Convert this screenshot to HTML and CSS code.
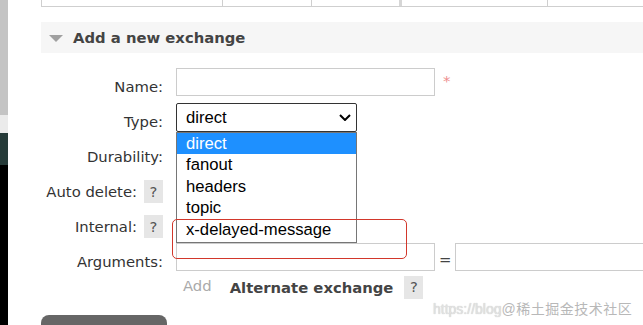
FILE: index.html
```html
<!DOCTYPE html>
<html>
<head>
<meta charset="utf-8">
<title>Add a new exchange</title>
<link rel="stylesheet" href="styles.css">
</head>
<body>
<div class="screen">
    <div class="edge">
        <div class="edge-a"></div>
        <div class="edge-b"></div>
        <div class="edge-c"></div>
        <div class="edge-d"></div>
    </div>
    <div class="main">
        <div class="tbl">
            <span class="cell w1"></span>
            <span class="cell w2"></span>
            <span class="cell w3"></span>
            <span class="cell w4 thick"></span>
            <span class="cell w5"></span>
        </div>
        <h2 class="sec-head"><span class="tri"></span>Add a new exchange</h2>
        <div class="form">
            <div class="row">
                <label class="lbl"><span class="txt">Name:</span></label>
                <div class="fld"><input class="inp" type="text"><span class="req">*</span></div>
            </div>
            <div class="row">
                <label class="lbl"><span class="txt">Type:</span></label>
                <div class="fld">
                    <div class="select">
                        <span>direct</span>
                        <svg class="chev" width="12" height="7" viewBox="0 0 12 7"><path d="M1 1L6 6L11 1" fill="none" stroke="#000" stroke-width="2"/></svg>
                    </div>
                    <ul class="drop">
                        <li class="on">direct</li>
                        <li>fanout</li>
                        <li>headers</li>
                        <li>topic</li>
                        <li>x-delayed-message</li>
                    </ul>
                </div>
            </div>
            <div class="row">
                <label class="lbl"><span class="txt">Durability:</span></label>
                <div class="fld"><div class="select small"></div></div>
            </div>
            <div class="row">
                <label class="lbl"><span class="txt">Auto delete:</span><span class="help">?</span></label>
                <div class="fld"><div class="select small"></div></div>
            </div>
            <div class="row">
                <label class="lbl"><span class="txt">Internal:</span><span class="help">?</span></label>
                <div class="fld"><div class="select small"></div></div>
            </div>
            <div class="row">
                <label class="lbl"><span class="txt">Arguments:</span></label>
                <div class="fld"><input class="inp" type="text"><span class="eq">=</span><input class="inp inp-val" type="text"></div>
            </div>
            <div class="links">
                <span class="add">Add</span>
                <span class="arg-link">Alternate exchange</span>
                <span class="help">?</span>
            </div>
        </div>
        <div class="btn"></div>
    </div>
    <div class="callout"></div>
    <div class="mark"><span class="url">https://blog</span><span class="site">@稀土掘金技术社区</span></div>
</div>
</body>
</html>
```

FILE: styles.css
```css
html,body,div,ul,li,h2{margin:0;padding:0;}
ul{list-style-type:none;}
html,body{height:325px;overflow:hidden;background:#fff;}
body{font:14.8px "DejaVu Sans",Verdana,sans-serif;color:#333;}

.screen{position:relative;display:flex;height:325px;overflow:hidden;}

/* window edge behind the page */
.edge{width:8px;flex:none;display:flex;flex-direction:column;}
.edge-a{height:115px;background:#c4c4c4;}
.edge-b{height:18px;background:#ebebeb;}
.edge-c{height:32px;background:#263b39;}
.edge-d{flex:1;background:#000;}

.main{flex:1;padding-left:33px;min-width:0;}

/* bottom of the table above */
.tbl{display:flex;height:6px;border-bottom:1px solid #cfcfcf;}
.tbl .cell{box-sizing:border-box;border-left:1px solid #cfcfcf;}
.tbl .w1{width:181px;}
.tbl .w2{width:89px;}
.tbl .w3{width:88px;}
.tbl .w4{width:148px;}
.tbl .w5{flex:1;}
.tbl .thick{border-left:3px solid #d6d6d6;}

.sec-head{display:flex;align-items:center;height:31px;margin-top:15px;padding-left:8px;background:#f6f6f6;font-size:14.8px;font-weight:700;color:#444;}
.tri{width:0;height:0;border-left:7px solid transparent;border-right:7px solid transparent;border-top:7px solid #a0a0a0;margin:1px 10px 0 0;}

.form{margin-top:15px;}
.row{display:grid;grid-template-columns:122px 1fr;column-gap:13px;height:35px;}
.lbl{display:flex;justify-content:flex-end;align-items:flex-start;}
.lbl .txt{padding-top:10px;line-height:18px;}
.help{display:inline-block;width:19px;height:23px;line-height:23px;text-align:center;background:#e6e6e6;color:#555;}
.lbl .help{margin:7px 0 0 7px;}

.fld{position:relative;display:flex;align-items:flex-start;}
.inp{box-sizing:border-box;width:259px;height:28px;margin:0;border:1px solid #ccc;padding:0 4px;font:inherit;background:#fff;}
.inp-val{width:200px;flex:none;}
.req{margin:4px 0 0 8px;line-height:18px;color:#ee8d8d;}
.eq{margin:0 4px;padding-top:8px;line-height:18px;color:#444;}

.select{box-sizing:border-box;display:flex;align-items:center;justify-content:space-between;width:181px;height:29px;border:1px solid #333;border-radius:2px;padding:0 5px 0 9px;font:16.67px "Liberation Sans",Arial,sans-serif;color:#000;background:#fff;}
.select.small{width:120px;}
.chev{display:block;}

.drop{position:absolute;left:0;top:29px;z-index:2;box-sizing:border-box;width:181px;border:1px solid #767676;padding-bottom:2px;background:#fff;font:16.67px "Liberation Sans",Arial,sans-serif;color:#000;}
.drop li{height:21.4px;line-height:21.4px;padding-left:9px;}
.drop li.on{background:#1e90ff;color:#fff;}

.links{display:flex;align-items:flex-start;height:22px;margin:-2px 0 0 135px;}
.links .add{margin:1px 0 0 7px;line-height:18px;color:#aaa;}
.links .arg-link{margin:3px 0 0 18px;line-height:18px;font-weight:700;color:#444;}
.links .help{margin-left:11px;height:22.5px;line-height:22.5px;}

.btn{width:126px;height:40px;margin-top:17px;border-radius:8px;background:#666;}

/* red annotation frame */
.callout{position:absolute;left:172px;top:219px;z-index:3;box-sizing:border-box;width:235px;height:40px;border:1.5px solid #d2372b;border-radius:5px;}

.mark{position:absolute;left:433px;top:298px;z-index:3;line-height:16px;font:14px "Liberation Sans","Noto Sans CJK SC",sans-serif;white-space:nowrap;}
.mark .url{color:#e2e2e2;text-shadow:0 0 1px #bbb;}
.mark .site{color:#b8b8b8;letter-spacing:0.5px;}
```
